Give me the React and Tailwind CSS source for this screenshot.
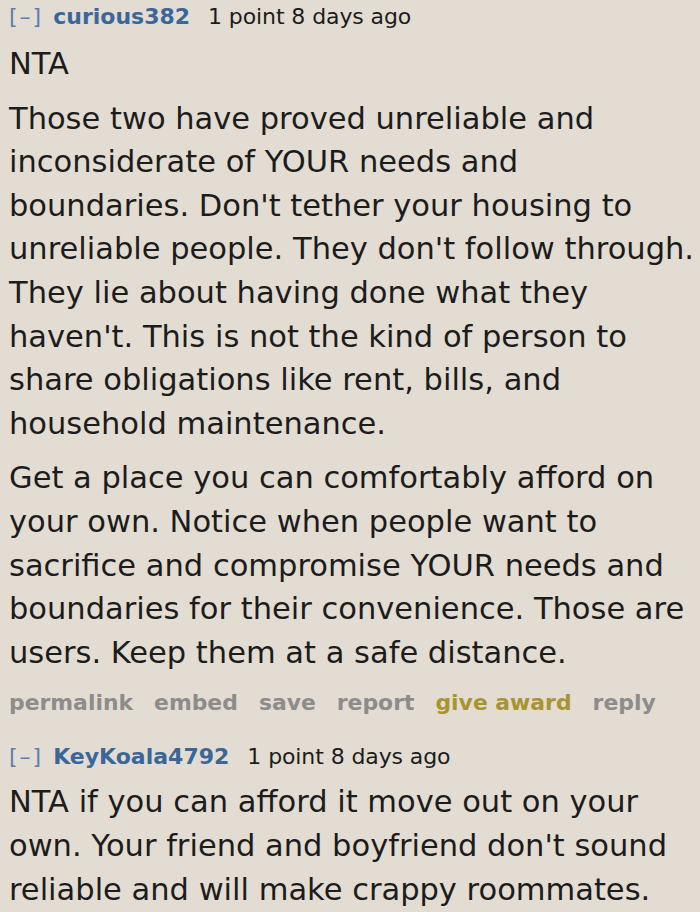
export default function App() {
  return (
    <div className="w-[700px] h-[912px] overflow-hidden bg-[#e3dcd2] text-[#1c1c1c] font-['DejaVu_Sans',Verdana,sans-serif]">
      <div className="pl-[9px] pt-[3px]">
        <div className="flex items-baseline h-[28px] text-[22px] leading-[28px]">
          <span className="text-[#5b7fae] tracking-[2px]">[–]</span>
          <span className="ml-[10px] font-bold text-[#3a6798]">curious382</span>
          <span className="ml-[18px] tracking-[-0.1px]">1 point 8 days ago</span>
        </div>
        <div className="mt-[11px] text-[30.5px] leading-[43.6px]">
          <p>NTA</p>
          <p className="mt-[11px]">
            Those two have proved unreliable and<br />
            inconsiderate of YOUR needs and<br />
            boundaries. Don't tether your housing to<br />
            unreliable people. They don't follow through.<br />
            They lie about having done what they<br />
            haven't. This is not the kind of person to<br />
            share obligations like rent, bills, and<br />
            household maintenance.
          </p>
          <p className="mt-[11px]">
            Get a place you can comfortably afford on<br />
            your own. Notice when people want to<br />
            sacrifice and compromise YOUR needs and<br />
            boundaries for their convenience. Those are<br />
            users. Keep them at a safe distance.
          </p>
        </div>
        <div className="mt-[15px] flex gap-[21px] text-[21.9px] leading-[28px] font-bold text-[#8c8c8c]">
          <span>permalink</span>
          <span>embed</span>
          <span>save</span>
          <span>report</span>
          <span className="text-[#a99432]">give award</span>
          <span>reply</span>
        </div>
        <div className="mt-[26px] flex items-baseline h-[28px] text-[22px] leading-[28px]">
          <span className="text-[#5b7fae] tracking-[2px]">[–]</span>
          <span className="ml-[10px] font-bold text-[#3a6798]">KeyKoala4792</span>
          <span className="ml-[18px] tracking-[-0.1px]">1 point 8 days ago</span>
        </div>
        <div className="mt-[9px] text-[30.5px] leading-[43.6px]">
          <p>
            NTA if you can afford it move out on your<br />
            own. Your friend and boyfriend don't sound<br />
            reliable and will make crappy roommates.
          </p>
        </div>
      </div>
    </div>
  )
}
